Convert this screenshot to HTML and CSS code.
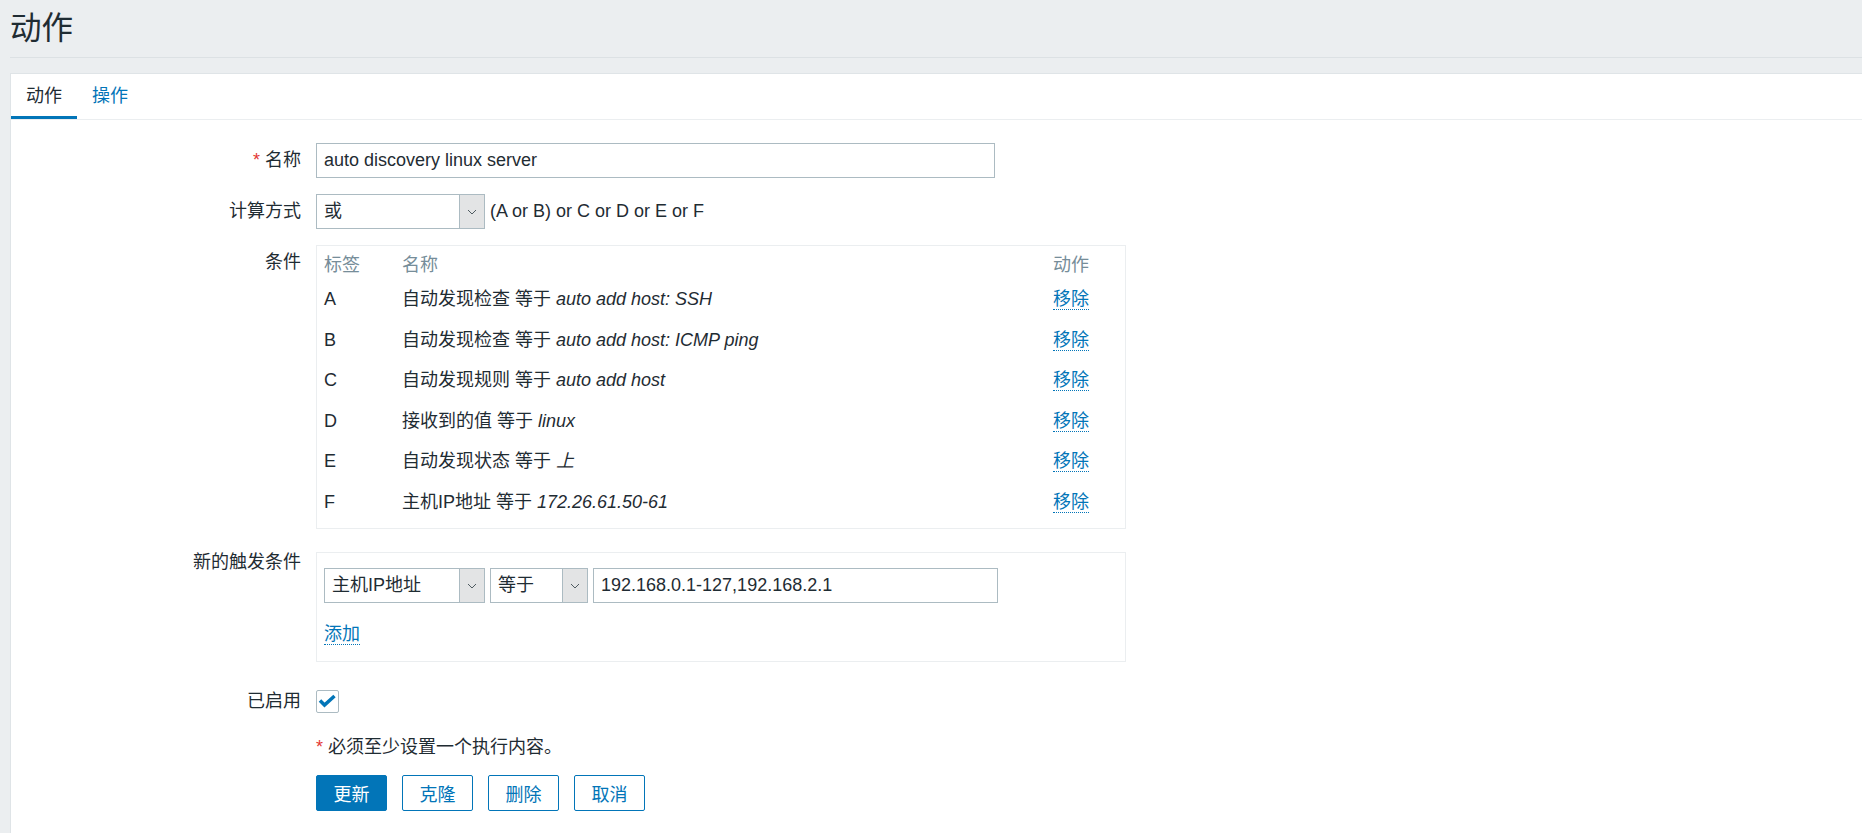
FILE: index.html
```html
<!DOCTYPE html>
<html lang="zh-CN">
<head>
    <meta charset="UTF-8">
    <title>动作</title>
    <link rel="stylesheet" href="styles.css">
</head>
<body>

    <!-- Cabeçalho -->
    <div class="header">
        <h1>动作</h1>
    </div>

    <div class="panel">
        <ul class="tabs">
            <li class="active">动作</li>
            <li><a href="#">操作</a></li>
        </ul>

        <div class="form">
            <div class="row">
                <div class="lbl"><span class="req">*</span> 名称</div>
                <div class="field">
                    <input type="text" class="text-input w-name" value="auto discovery linux server">
                </div>
            </div>

            <div class="row">
                <div class="lbl">计算方式</div>
                <div class="field inline">
                    <div class="select w-calc">
                        <span class="select-val">或</span>
                        <span class="select-btn"><svg width="10" height="6" viewBox="0 0 10 6"><polyline points="1,1 5,5 9,1" fill="none" stroke="#4f5b61" stroke-width="1"/></svg></span>
                    </div>
                    <span class="formula">(A or B) or C or D or E or F</span>
                </div>
            </div>

            <div class="row">
                <div class="lbl">条件</div>
                <div class="field">
                    <div class="box cond-box">
                        <div class="cond-row cond-head">
                            <span>标签</span><span>名称</span><span>动作</span>
                        </div>
                        <div class="cond-row">
                            <span>A</span><span>自动发现检查 等于 <em>auto add host: SSH</em></span><span><a href="#" class="link">移除</a></span>
                        </div>
                        <div class="cond-row">
                            <span>B</span><span>自动发现检查 等于 <em>auto add host: ICMP ping</em></span><span><a href="#" class="link">移除</a></span>
                        </div>
                        <div class="cond-row">
                            <span>C</span><span>自动发现规则 等于 <em>auto add host</em></span><span><a href="#" class="link">移除</a></span>
                        </div>
                        <div class="cond-row">
                            <span>D</span><span>接收到的值 等于 <em>linux</em></span><span><a href="#" class="link">移除</a></span>
                        </div>
                        <div class="cond-row">
                            <span>E</span><span>自动发现状态 等于 <em>上</em></span><span><a href="#" class="link">移除</a></span>
                        </div>
                        <div class="cond-row">
                            <span>F</span><span>主机IP地址 等于 <em>172.26.61.50-61</em></span><span><a href="#" class="link">移除</a></span>
                        </div>
                    </div>
                </div>
            </div>

            <div class="row">
                <div class="lbl">新的触发条件</div>
                <div class="field">
                    <div class="box new-box">
                        <div class="inline">
                            <div class="select w-type">
                                <span class="select-val">主机IP地址</span>
                                <span class="select-btn"><svg width="10" height="6" viewBox="0 0 10 6"><polyline points="1,1 5,5 9,1" fill="none" stroke="#4f5b61" stroke-width="1"/></svg></span>
                            </div>
                            <div class="select w-op">
                                <span class="select-val">等于</span>
                                <span class="select-btn"><svg width="10" height="6" viewBox="0 0 10 6"><polyline points="1,1 5,5 9,1" fill="none" stroke="#4f5b61" stroke-width="1"/></svg></span>
                            </div>
                            <input type="text" class="text-input w-ip" value="192.168.0.1-127,192.168.2.1">
                        </div>
                        <div class="add-line"><a href="#" class="link">添加</a></div>
                    </div>
                </div>
            </div>

            <div class="row">
                <div class="lbl">已启用</div>
                <div class="field">
                    <span class="checkbox"><svg width="21" height="21" viewBox="0 0 21 21"><polyline points="3,9.5 7.5,14 17.5,5" fill="none" stroke="#0275b8" stroke-width="3.5"/></svg></span>
                </div>
            </div>

            <div class="row note-row">
                <div class="lbl"></div>
                <div class="field"><span class="req">*</span> 必须至少设置一个执行内容。</div>
            </div>

            <div class="row">
                <div class="lbl"></div>
                <div class="field buttons">
                    <button class="btn btn-main">更新</button>
                    <button class="btn btn-alt">克隆</button>
                    <button class="btn btn-alt">删除</button>
                    <button class="btn btn-alt">取消</button>
                </div>
            </div>
        </div>
    </div>

</body>
</html>
```

FILE: styles.css
```css
* {
    box-sizing: border-box;
}

body {
    margin: 0;
    height: 100vh;
    display: flex;
    flex-direction: column;
    background-color: #ebeef0;
    font-family: "Liberation Sans", "Noto Sans CJK SC", sans-serif;
    font-size: 18px;
    color: #1f2c33;
    overflow: hidden;
}

a {
    color: #0275b8;
    text-decoration: none;
}

.header {
    margin-left: 10px;
    height: 58px;
    border-bottom: 1px solid #dce1e4;
}

.header h1 {
    margin: 0;
    font-size: 31.5px;
    font-weight: normal;
    line-height: 57px;
}

.panel {
    flex: 1;
    margin-top: 15px;
    margin-left: 10px;
    background-color: #fff;
    border: 1px solid #dfe4e7;
    border-right: none;
    border-bottom: none;
}

.tabs {
    display: flex;
    margin: 0;
    padding: 0;
    list-style: none;
    border-bottom: 1px solid #ebeef0;
}

.tabs li {
    padding: 3px 15px 0;
    line-height: 39px;
    border-bottom: 3px solid transparent;
}

.tabs li.active {
    border-bottom-color: #0275b8;
}

.form {
    padding-top: 23px;
    display: flex;
    flex-direction: column;
    gap: 16px;
}

.row {
    display: grid;
    grid-template-columns: 290px 1fr;
    column-gap: 15px;
    align-items: start;
}

.lbl {
    text-align: right;
    line-height: 35px;
    white-space: nowrap;
}

.req {
    color: #e33734;
}

.inline {
    display: flex;
    align-items: center;
    gap: 5px;
}

.text-input {
    height: 35px;
    padding: 0 7px;
    border: 1px solid #acbbc2;
    font-family: inherit;
    font-size: 18px;
    color: #1f2c33;
    background: #fff;
    outline: none;
}

.w-name { width: 679px; }
.w-ip { width: 405px; }
.w-calc { width: 169px; }
.w-type { width: 161px; }
.w-op { width: 98px; }

.select {
    display: flex;
    height: 35px;
    border: 1px solid #acbbc2;
    background: #fff;
}

.select-val {
    flex: 1;
    padding-left: 7px;
    line-height: 33px;
    white-space: nowrap;
}

.select-btn {
    width: 25px;
    display: flex;
    align-items: center;
    justify-content: center;
    border-left: 1px solid #acbbc2;
    background-color: #e3e4e5;
}

.formula {
    line-height: 35px;
}

.box {
    width: 810px;
    border: 1px solid #ebeef0;
}

.cond-box {
    padding: 5px 0 6px 7px;
}

.cond-row {
    display: grid;
    grid-template-columns: 78px 1fr 72px;
    line-height: 40.5px;
    height: 40.5px;
}

.cond-head {
    color: #768d99;
    line-height: 28px;
    height: 28px;
}

.cond-row em {
    font-style: italic;
}

.link {
    border-bottom: 1px dotted #0275b8;
}

.new-box {
    margin-top: 7px;
    padding: 15px 7px 15px;
}

.add-line {
    margin-top: 20px;
    line-height: 23px;
}

.checkbox {
    margin-top: 6px;
    width: 23px;
    height: 23px;
    display: flex;
    align-items: center;
    justify-content: center;
    border: 1px solid #acbbc2;
    border-radius: 2px;
}

.row:nth-child(5) {
    margin-top: 6px;
}

.note-row .field {
    line-height: 24px;
}

.buttons {
    display: flex;
    gap: 15px;
}

.btn {
    width: 71px;
    height: 36px;
    padding: 0;
    border-radius: 2px;
    font-family: inherit;
    font-size: 18px;
    cursor: pointer;
}

.btn-main {
    background-color: #0275b8;
    border: 1px solid #0275b8;
    color: #fff;
}

.btn-alt {
    background-color: #fff;
    border: 1px solid #0275b8;
    color: #0275b8;
}
```
